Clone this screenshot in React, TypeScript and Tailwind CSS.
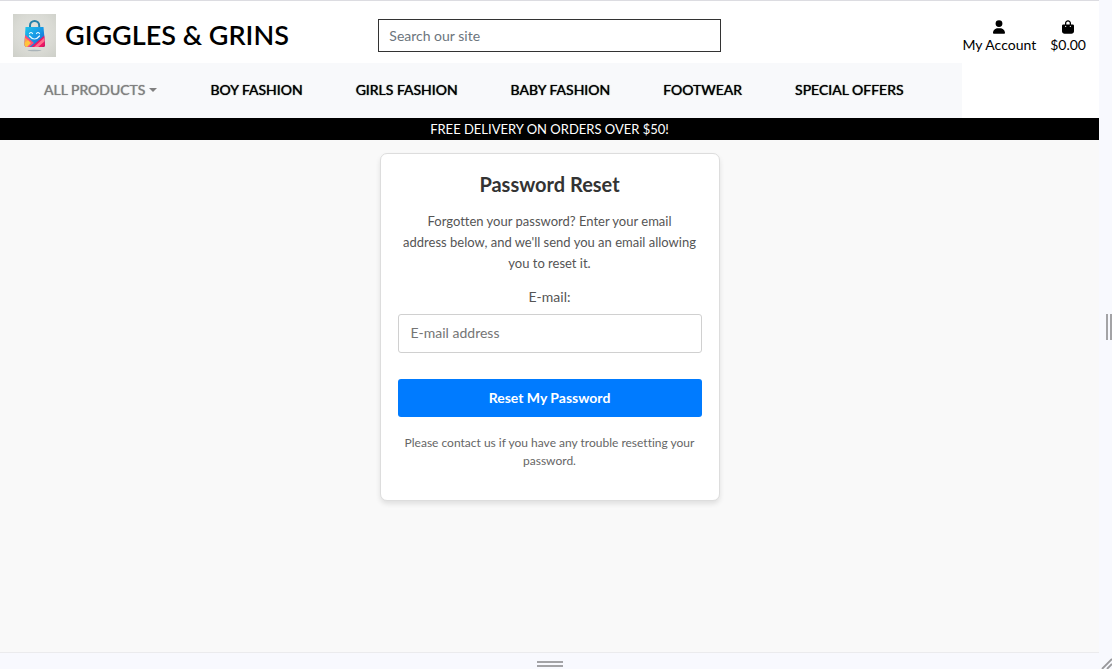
import React from "react";

const categories = ["BOY FASHION", "GIRLS FASHION", "BABY FASHION", "FOOTWEAR", "SPECIAL OFFERS"];

function Logo() {
  return (
    <svg viewBox="0 0 43 43" className="size-[43px] shrink-0" aria-hidden="true">
      <defs>
        <radialGradient id="backdrop" cx="0.5" cy="0.45" r="0.75">
          <stop offset="0" stopColor="#e3e4df" />
          <stop offset="0.6" stopColor="#d9dad4" />
          <stop offset="1" stopColor="#cdcfc8" />
        </radialGradient>
        <linearGradient id="blue" x1="0" y1="0" x2="1" y2="1">
          <stop offset="0" stopColor="#22c8ea" />
          <stop offset="0.5" stopColor="#1696e6" />
          <stop offset="1" stopColor="#1a4fc0" />
        </linearGradient>
        <clipPath id="bag">
          <path d="M12.500 13h18l1.500 17.500q0 2.500-2.500 2.500h-15.500q-2.500 0-2.500-2.500z" />
        </clipPath>
      </defs>
      <rect width="43" height="43" fill="url(#backdrop)" />
      <ellipse cx="21.500" cy="36.500" rx="7" ry="0.800" fill="#a9b3b8" />
      <path d="M17 15v-3.500a4.600 4.600 0 0 1 9.200 0V15" fill="none" stroke="#2580a8" strokeWidth="2" />
      <g clipPath="url(#bag)">
        <rect x="11" y="12" width="22" height="22" fill="url(#blue)" />
        <path d="M11 20l10 9-6 5h-4z" fill="#ff4a7a" />
        <path d="M11 23l4 3-4 4z" fill="#ffa04a" />
        <path d="M11 29l4-3 3 3-5 5h-2z" fill="#ffc43d" />
        <path d="M33 20L17 34h16z" fill="#ec1763" />
        <path d="M33 22L20 34h4l9-8z" fill="#ff6c8c" />
        <path d="M33 29l-5 5h5z" fill="#c91a63" />
      </g>
      <path d="M16.500 19.500q1.500-2 3 0M23.500 19.500q1.500-2 3 0M16.500 22q5 6 10 0" fill="none" stroke="#e5fbff" strokeWidth="1.200" strokeLinecap="round" />
    </svg>
  );
}

function UserIcon() {
  return (
    <svg viewBox="0 0 448 512" className="h-[14px] w-3" fill="currentColor" aria-hidden="true">
      <path d="M224 256A128 128 0 1 0 224 0a128 128 0 1 0 0 256zm-45.700 48C79.800 304 0 383.800 0 482.300C0 498.700 13.300 512 29.700 512H418.300c16.400 0 29.700-13.300 29.700-29.700C448 383.800 368.200 304 269.700 304H178.300z" />
    </svg>
  );
}

function BagIcon() {
  return (
    <svg viewBox="0 0 448 512" className="h-[14px] w-3" fill="currentColor" aria-hidden="true">
      <path d="M160 112c0-35.300 28.700-64 64-64s64 28.700 64 64v48H160V112zm-48 48H48c-26.500 0-48 21.500-48 48V416c0 53 43 96 96 96H352c53 0 96-43 96-96V208c0-26.500-21.500-48-48-48H336V112C336 50.100 285.900 0 224 0S112 50.100 112 112v48zm24 48a24 24 0 1 1 0 48 24 24 0 1 1 0-48zm152 24a24 24 0 1 1 48 0 24 24 0 1 1-48 0z" />
    </svg>
  );
}

export default function App() {
  return (
    <div className="flex min-h-screen flex-col bg-[#f8f9fe] font-['Lato',sans-serif] text-sm text-black [font-variant-ligatures:none]">
      <div className="flex grow">
        <div className="flex min-w-0 grow flex-col border-t border-b border-t-[#dcdce1] border-b-[#ebebed] bg-[#f9f9f9]">
          <header className="bg-white">
            <div className="grid h-[62px] grid-cols-3">
              <a href="#home" className="flex items-start gap-[9px] pt-[13px] pl-[13px] whitespace-nowrap">
                <Logo />
                <span className="text-[27px] leading-[42px] font-semibold">GIGGLES &amp; GRINS</span>
              </a>
              <form className="px-3 pt-[18px]">
                <input
                  type="search"
                  aria-label="Search our site"
                  placeholder="Search our site"
                  className="block h-[33px] w-full border border-[#333] bg-white px-[10px] placeholder:text-[#6c757d] focus:outline-none"
                />
              </form>
              <div className="flex justify-end gap-[14px] pt-[19px] pr-[13px] whitespace-nowrap">
                <a href="#account" className="flex flex-col items-center gap-px leading-5">
                  <UserIcon />
                  <span>My Account</span>
                </a>
                <a href="#bag" className="flex flex-col items-center gap-px leading-5">
                  <BagIcon />
                  <span>$0.00</span>
                </a>
              </div>
            </div>
            <nav className="flex h-[55px] w-7/8 items-center gap-[53px] bg-[#f8f9fb] pb-px pl-11 whitespace-nowrap">
              <button type="button" className="flex items-center gap-1 text-[#808080] [text-shadow:0_0_1px_#808080]">
                ALL PRODUCTS
                <svg viewBox="0 0 8 4" className="h-1 w-2" fill="currentColor" aria-hidden="true">
                  <path d="M0 0h8L4 4z" />
                </svg>
              </button>
              {categories.map((category) => (
                <a key={category} href="#category" className="[text-shadow:0_0_1px_#000]">
                  {category}
                </a>
              ))}
            </nav>
          </header>
          <p className="h-[22px] bg-black text-center text-[13px] leading-[22px] text-white">
            FREE DELIVERY ON ORDERS OVER $50!
          </p>
          <main className="grow px-3 pt-[13px] pb-6">
            <section className="mx-auto max-w-[340px] rounded-[7px] border border-[#dddddd] bg-white px-[17px] pt-4 pb-[30px] text-center text-[#555] shadow-[0_3px_5px_rgba(0,0,0,0.1)]">
              <h1 className="text-xl leading-[28px] font-bold text-[#333]">Password Reset</h1>
              <p className="mt-[13px] text-[13px] leading-[21px]">
                Forgotten your password? Enter your email
                <br />
                address below, and we'll send you an email allowing you to reset it.
              </p>
              <form>
                <label htmlFor="email" className="mt-[13px] block leading-5">E-mail:</label>
                <input
                  id="email"
                  type="email"
                  placeholder="E-mail address"
                  className="mt-[7px] block h-[39px] w-full rounded-[3px] border border-[#d0d0d0] bg-white px-3 pb-[2px] placeholder:text-[#757575] focus:outline-none"
                />
                <button type="button" className="mt-[26px] h-[38px] w-full rounded-[3px] bg-[#007bff] font-bold text-white">
                  Reset My Password
                </button>
              </form>
              <p className="mt-[17px] text-xs leading-[18px] text-[#666]">
                Please contact us if you have any trouble resetting your password.
              </p>
            </section>
          </main>
        </div>
        <div className="flex w-[13px] shrink-0 items-center justify-end" aria-hidden="true">
          <div className="h-[26px] w-[6px] border-x-2 border-[#a3a3a6]" />
        </div>
      </div>
      <div className="flex h-4 shrink-0 items-end" aria-hidden="true">
        <div className="flex grow justify-center pb-[2px]">
          <div className="h-[6px] w-[26px] border-y-2 border-[#a3a3a6]" />
        </div>
        <svg viewBox="0 0 13 16" className="h-4 w-[13px]" stroke="#99999c" strokeWidth="1.800">
          <path d="M3 16L13 6M8 16L13 11" />
        </svg>
      </div>
    </div>
  );
}
